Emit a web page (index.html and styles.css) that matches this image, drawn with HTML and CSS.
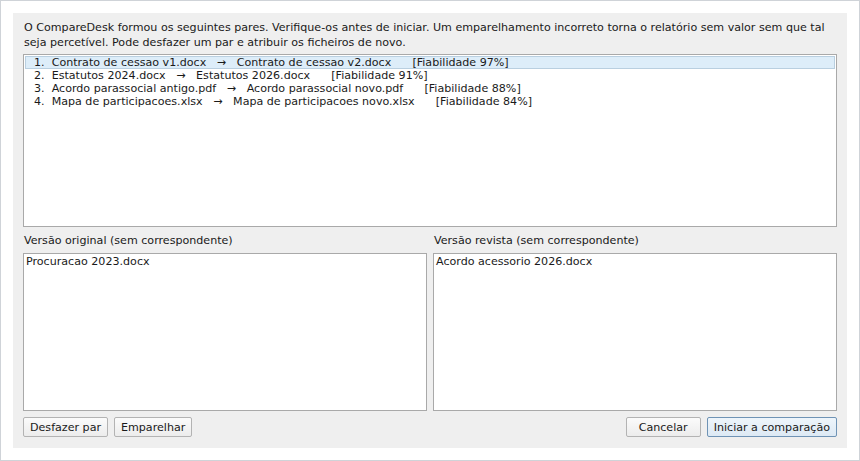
FILE: index.html
```html
<!DOCTYPE html>
<html lang="pt">
<head>
    <meta charset="UTF-8">
    <title>CompareDesk - Pares de ficheiros</title>
    <link rel="stylesheet" href="styles.css">
</head>
<body>
    <div class="window">
        <div class="dialog">
            <p class="intro">O CompareDesk formou os seguintes pares. Verifique-os antes de iniciar. Um emparelhamento incorreto torna o relatório sem valor sem que tal seja percetível. Pode desfazer um par e atribuir os ficheiros de novo.</p>

            <!-- pares propostos -->
            <ul class="listbox pairs">
                <li class="selected">1.  Contrato de cessao v1.docx   →   Contrato de cessao v2.docx      [Fiabilidade 97%]</li>
                <li>2.  Estatutos 2024.docx   →   Estatutos 2026.docx      [Fiabilidade 91%]</li>
                <li>3.  Acordo parassocial antigo.pdf   →   Acordo parassocial novo.pdf      [Fiabilidade 88%]</li>
                <li>4.  Mapa de participacoes.xlsx   →   Mapa de participacoes novo.xlsx      [Fiabilidade 84%]</li>
            </ul>

            <!-- ficheiros sem par -->
            <div class="unmatched">
                <div class="column">
                    <label>Versão original (sem correspondente)</label>
                    <ul class="listbox single">
                        <li>Procuracao 2023.docx</li>
                    </ul>
                </div>
                <div class="column">
                    <label>Versão revista (sem correspondente)</label>
                    <ul class="listbox single">
                        <li>Acordo acessorio 2026.docx</li>
                    </ul>
                </div>
            </div>

            <div class="buttons">
                <button class="btn">Desfazer par</button>
                <button class="btn">Emparelhar</button>
                <span class="spacer"></span>
                <button class="btn">Cancelar</button>
                <button class="btn btn-default">Iniciar a comparação</button>
            </div>
        </div>
    </div>
</body>
</html>
```

FILE: styles.css
```css
html, body {
    margin: 0;
    padding: 0;
    background: #fff;
}

body {
    font-family: "DejaVu Sans", sans-serif;
    font-size: 11.1px;
    color: #1a1a1a;
}

.window {
    box-sizing: border-box;
    width: 860px;
    height: 461px;
    border: 1px solid #cfd3d8;
    padding: 12px;
}

.dialog {
    box-sizing: border-box;
    height: 435px;
    background: #efefef;
    padding: 7px 10px 11px 10px;
    display: flex;
    flex-direction: column;
}

.intro {
    margin: 0 0 4px 1px;
    line-height: 15px;
}

.listbox {
    list-style: none;
    margin: 0;
    padding: 1px;
    background: #fff;
    border: 1px solid #a9a9a9;
    box-sizing: border-box;
}

.listbox li {
    line-height: 13px;
    white-space: pre;
    padding-left: 1px;
}

.pairs {
    height: 176px;
}

.pairs li {
    padding-left: 9px;
}

.pairs li.selected {
    background: #ddedf9;
    outline: 1px solid #b9cfe0;
    outline-offset: -1px;
}

.unmatched {
    display: flex;
    gap: 6px;
    margin-top: 6px;
}

.column {
    flex: 1;
    display: flex;
    flex-direction: column;
}

.column label {
    line-height: 14px;
    margin: 1px 0 5px 1px;
}

.single {
    height: 158px;
    padding-top: 1px;
}

.buttons {
    display: flex;
    gap: 6px;
    margin-top: 6px;
}

.spacer {
    flex: 1;
}

.btn {
    font-family: "DejaVu Sans", sans-serif;
    font-size: 11.1px;
    color: #1a1a1a;
    height: 20px;
    min-width: 75px;
    padding: 0 6px;
    background: linear-gradient(#fbfbfb, #ececec);
    border: 1px solid #b3b3b3;
    border-radius: 2px;
}

.btn-default {
    background: linear-gradient(#eef5fb, #dde9f4);
    border-color: #6f93b5;
}
```
